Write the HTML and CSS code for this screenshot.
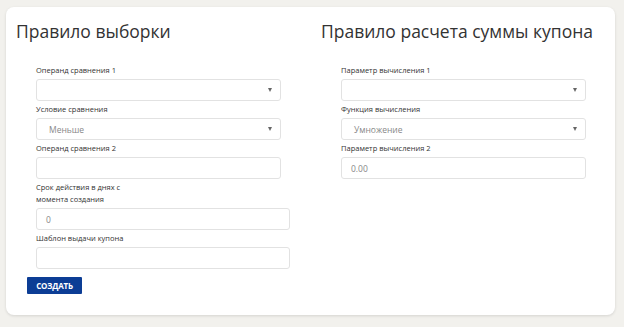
FILE: index.html
```html
<!DOCTYPE html>
<html lang="ru">
<head>
<meta charset="utf-8">
<link rel="stylesheet" href="styles.css">
</head>
<body>
<div class="card">
  <div class="grid">
    <section class="col">
      <h2 class="title">Правило выборки</h2>
      <div class="form">
        <label class="label">Операнд сравнения 1</label>
        <div class="field select"><span class="value"></span><span class="arrow"></span></div>
        <label class="label">Условие сравнения</label>
        <div class="field select"><span class="value">Меньше</span><span class="arrow"></span></div>
        <label class="label">Операнд сравнения 2</label>
        <div class="field"><span class="value"></span></div>
        <label class="label narrow">Срок действия в днях с момента создания</label>
        <div class="field wide"><span class="value num">0</span></div>
        <label class="label">Шаблон выдачи купона</label>
        <div class="field wide"><span class="value"></span></div>
      </div>
      <button class="btn">СОЗДАТЬ</button>
    </section>
    <section class="col">
      <h2 class="title">Правило расчета суммы купона</h2>
      <div class="form">
        <label class="label">Параметр вычисления 1</label>
        <div class="field select"><span class="value"></span><span class="arrow"></span></div>
        <label class="label">Функция вычисления</label>
        <div class="field select"><span class="value">Умножение</span><span class="arrow"></span></div>
        <label class="label">Параметр вычисления 2</label>
        <div class="field"><span class="value num">0.00</span></div>
      </div>
    </section>
  </div>
</div>
</body>
</html>
```
FILE: styles.css
```css
html, body {
  margin: 0;
  padding: 0;
}
body {
  background: #f2f1ed;
  font-family: "Open Sans", "Noto Sans", sans-serif;
  color: #333;
  width: 624px;
  height: 327px;
  overflow: hidden;
}
.card {
  margin: 7px 0 0 6px;
  width: 609px;
  height: 308px;
  box-sizing: border-box;
  background: #fff;
  border-radius: 8px;
  box-shadow: 0 1px 3px rgba(0,0,0,0.12);
  padding: 0 10px;
}
.grid {
  display: grid;
  grid-template-columns: 284px 284px;
  column-gap: 21px;
}
.title {
  margin: 0;
  padding-top: 11px;
  height: 55px;
  font-size: 17.5px;
  font-weight: 400;
  line-height: 26px;
  color: #333;
  white-space: nowrap;
  box-sizing: border-box;
}
.form {
  display: flex;
  flex-direction: column;
  align-items: flex-start;
  padding-left: 20px;
}
.label {
  display: block;
  font-size: 7.5px;
  line-height: 12px;
  padding: 2px 0 3px;
  color: #333;
}
.label.narrow {
  width: 92px;
}
.field {
  width: 245px;
  height: 22px;
  box-sizing: border-box;
  border: 1px solid #e2e2e2;
  border-radius: 3px;
  display: flex;
  align-items: center;
  justify-content: space-between;
  padding: 0 8px 0 9px;
  background: #fff;
}
.field.wide {
  width: 254px;
}
.value {
  font-size: 8.5px;
  color: #888;
}
.select .value {
  padding-left: 3px;
}
.arrow {
  width: 0;
  height: 0;
  border-left: 2.5px solid transparent;
  border-right: 2.5px solid transparent;
  border-top: 4px solid #666;
}
.btn {
  margin: 8px 0 0 11px;
  height: 17px;
  width: 55px;
  padding: 0;
  border: 0;
  border-radius: 1px;
  background: #0c3d95;
  color: #fff;
  font-family: "Open Sans", sans-serif;
  font-size: 8px;
  font-weight: 700;
  display: flex;
  align-items: center;
  justify-content: center;
  letter-spacing: -0.2px;
}
```
